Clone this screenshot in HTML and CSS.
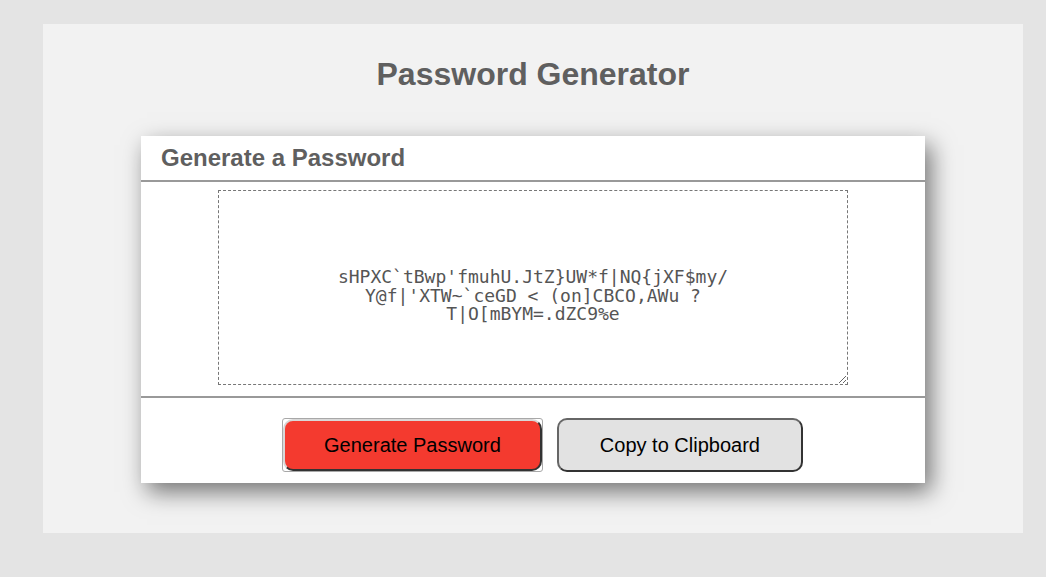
FILE: index.html
```html
<!DOCTYPE html>
<html lang="en">
<head>
<meta charset="utf-8">
<title>Password Generator</title>
<link rel="stylesheet" href="styles.css">
</head>
<body>
<div class="wrapper">
  <h1 class="title">Password Generator</h1>
  <div class="card">
    <div class="card-header">
      <h2 class="card-title">Generate a Password</h2>
    </div>
    <div class="card-body">
      <textarea class="password" readonly aria-label="Generated Password">sHPXC`tBwp'fmuhU.JtZ}UW*f|NQ{jXF$my/
Y@f|'XTW~`ceGD &lt; (on]CBCO,AWu ?
T|O[mBYM=.dZC9%e</textarea>
    </div>
    <div class="card-footer">
      <button class="btn btn-generate" type="button">Generate Password</button>
      <button class="btn btn-copy" type="button">Copy to Clipboard</button>
    </div>
  </div>
</div>
</body>
</html>
```
FILE: styles.css
```css
html, body {
  margin: 0;
  padding: 0;
}

body {
  background: #e4e4e4;
  font-family: "Liberation Sans", Arial, Helvetica, sans-serif;
}

.wrapper {
  margin: 24px 0 0 43px;
  width: 980px;
  height: 509px;
  box-sizing: border-box;
  padding-top: 32px;
  background: #f2f2f2;
}

.title {
  margin: 0 0 43px;
  font-size: 32px;
  line-height: 37px;
  font-weight: bold;
  text-align: center;
  color: #5f5f5f;
}

.card {
  width: 784px;
  margin: 0 auto;
  background: #fff;
  box-shadow: 6px 9px 22px rgba(0, 0, 0, 0.52);
}

.card-header {
  padding: 8px 20px;
  border-bottom: 2px solid #999;
}

.card-title {
  margin: 0;
  font-size: 24px;
  line-height: 28px;
  font-weight: bold;
  color: #5f5f5f;
}

.card-body {
  padding: 8px 0 11px;
  border-bottom: 2px solid #999;
}

.password {
  display: block;
  margin: 0 auto;
  width: 630px;
  height: 195px;
  box-sizing: border-box;
  padding: 77px 10px 0;
  border: 1px dashed #777;
  border-radius: 0;
  background: #fff;
  font-family: "DejaVu Sans Mono", monospace;
  font-size: 18px;
  line-height: 18.5px;
  color: #555;
  text-align: center;
  overflow: hidden;
  outline: none;
}

.card-footer {
  display: flex;
  justify-content: center;
  align-items: center;
  gap: 15px;
  padding: 20px 0 11px 20px;
}

.btn {
  font-family: "Liberation Sans", Arial, Helvetica, sans-serif;
  font-size: 20px;
  line-height: 22px;
  color: #000;
  border-radius: 10px;
  cursor: pointer;
  margin: 0;
}

.btn-generate {
  position: relative;
  padding: 13px 39px;
  background: #f43a2f;
  border: 2px solid;
  border-color: #d8d8d8 #333 #333 #d8d8d8;
}

.btn-generate::after {
  content: "";
  position: absolute;
  top: -3px;
  left: -3px;
  right: -3px;
  bottom: -3px;
  border: 1px solid #a8a8a8;
  border-radius: 3px;
  pointer-events: none;
}

.btn-copy {
  padding: 14px 41px;
  background: #e2e2e2;
  border: 2px solid;
  border-color: #666 #333 #333 #666;
}
```
